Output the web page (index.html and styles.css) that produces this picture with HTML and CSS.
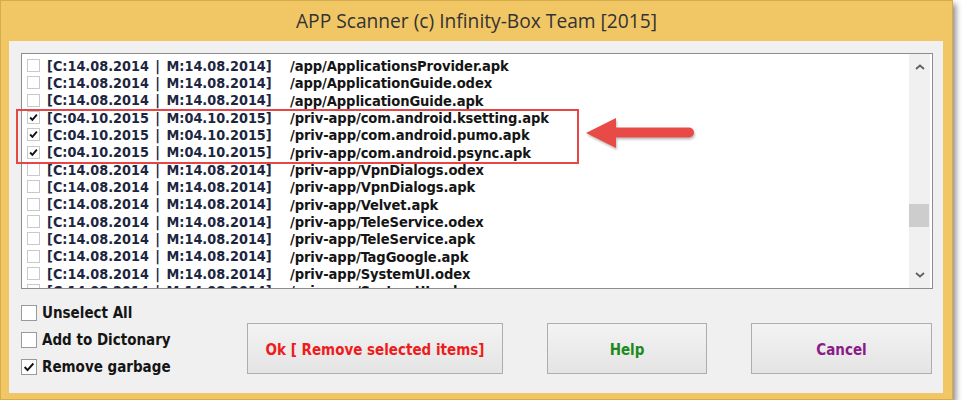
FILE: index.html
```html
<!DOCTYPE html>
<html lang="en">
<head>
  <meta charset="UTF-8">
  <title>APP Scanner (c) Infinity-Box Team [2015]</title>
  <link rel="stylesheet" href="styles.css">
</head>
<body>
  <div class="window">
    <div class="titlebar">APP Scanner (c) Infinity-Box Team [2015]</div>
    <div class="client">
      <div class="list">
        <div class="rows">
          <div class="row"><span class="box"></span><span class="date">[C:14.08.2014 | M:14.08.2014]</span><span class="path">/app/ApplicationsProvider.apk</span></div>
          <div class="row"><span class="box"></span><span class="date">[C:14.08.2014 | M:14.08.2014]</span><span class="path">/app/ApplicationGuide.odex</span></div>
          <div class="row"><span class="box"></span><span class="date">[C:14.08.2014 | M:14.08.2014]</span><span class="path">/app/ApplicationGuide.apk</span></div>
          <div class="row"><span class="box checked"><svg viewBox="0 0 13 13"><path d="M2.5 6.5 L5.2 9.3 L10.5 3.2"/></svg></span><span class="date">[C:04.10.2015 | M:04.10.2015]</span><span class="path">/priv-app/com.android.ksetting.apk</span></div>
          <div class="row"><span class="box checked"><svg viewBox="0 0 13 13"><path d="M2.5 6.5 L5.2 9.3 L10.5 3.2"/></svg></span><span class="date">[C:04.10.2015 | M:04.10.2015]</span><span class="path">/priv-app/com.android.pumo.apk</span></div>
          <div class="row"><span class="box checked"><svg viewBox="0 0 13 13"><path d="M2.5 6.5 L5.2 9.3 L10.5 3.2"/></svg></span><span class="date">[C:04.10.2015 | M:04.10.2015]</span><span class="path">/priv-app/com.android.psync.apk</span></div>
          <div class="row"><span class="box"></span><span class="date">[C:14.08.2014 | M:14.08.2014]</span><span class="path">/priv-app/VpnDialogs.odex</span></div>
          <div class="row"><span class="box"></span><span class="date">[C:14.08.2014 | M:14.08.2014]</span><span class="path">/priv-app/VpnDialogs.apk</span></div>
          <div class="row"><span class="box"></span><span class="date">[C:14.08.2014 | M:14.08.2014]</span><span class="path">/priv-app/Velvet.apk</span></div>
          <div class="row"><span class="box"></span><span class="date">[C:14.08.2014 | M:14.08.2014]</span><span class="path">/priv-app/TeleService.odex</span></div>
          <div class="row"><span class="box"></span><span class="date">[C:14.08.2014 | M:14.08.2014]</span><span class="path">/priv-app/TeleService.apk</span></div>
          <div class="row"><span class="box"></span><span class="date">[C:14.08.2014 | M:14.08.2014]</span><span class="path">/priv-app/TagGoogle.apk</span></div>
          <div class="row"><span class="box"></span><span class="date">[C:14.08.2014 | M:14.08.2014]</span><span class="path">/priv-app/SystemUI.odex</span></div>
          <div class="row"><span class="box"></span><span class="date">[C:14.08.2014 | M:14.08.2014]</span><span class="path">/priv-app/SystemUI.apk</span></div>
        </div>
        <div class="scrollbar">
          <svg class="arrow-up" viewBox="0 0 10 6"><path d="M1 5 L5 1.5 L9 5"/></svg>
          <div class="track"><div class="thumb"></div></div>
          <svg class="arrow-down" viewBox="0 0 10 6"><path d="M1 1 L5 4.5 L9 1"/></svg>
        </div>
      </div>

      <div class="bottom">
        <div class="options">
          <label class="option"><span class="cb"></span>Unselect All</label>
          <label class="option"><span class="cb"></span>Add to Dictonary</label>
          <label class="option"><span class="cb"><svg viewBox="0 0 16 16"><path d="M3 8 L6.3 11.5 L13 4"/></svg></span>Remove garbage</label>
        </div>
        <button class="btn btn-ok">Ok [ Remove selected items]</button>
        <button class="btn btn-help">Help</button>
        <button class="btn btn-cancel">Cancel</button>
      </div>
    </div>

    <div class="highlight"></div>
    <svg class="callout" viewBox="0 0 115 36">
      <line x1="30" y1="17.5" x2="105" y2="17.5"/>
      <polygon points="2,18 32,3 32,33"/>
    </svg>
  </div>
</body>
</html>
```

FILE: styles.css
```css
body {
  margin: 0;
  background-color: #ffffff;
  font-family: "DejaVu Sans Condensed", "DejaVu Sans", sans-serif;
}

.window {
  position: relative;
  width: 953px;
  height: 400px;
  box-sizing: border-box;
  background-color: #f1c766;
  border: 1px solid #d6ab4c;
  box-shadow: 3px 4px 6px rgba(0, 0, 0, 0.45);
  display: flex;
  flex-direction: column;
}

.titlebar {
  height: 40px;
  line-height: 40px;
  text-align: center;
  font-family: "Open Sans", "Noto Sans", sans-serif;
  font-size: 19.2px;
  color: #333333;
}

.client {
  flex: 1;
  margin: 0 9px 6px 8px;
  background-color: #f0f0f0;
  padding: 12px 10px 0 12px;
  display: flex;
  flex-direction: column;
}

/* list box */
.list {
  height: 236px;
  box-sizing: border-box;
  border: 1px solid #8d8d8d;
  background-color: #ffffff;
  display: flex;
}

.rows {
  flex: 1;
  overflow: hidden;
  padding-top: 3px;
}

.row {
  height: 17.33px;
  display: flex;
  align-items: center;
  font-weight: bold;
  white-space: nowrap;
}

.box {
  width: 13px;
  height: 13px;
  box-sizing: border-box;
  border: 1px solid #c9c9c9;
  margin-left: 5px;
  margin-right: 7px;
  flex-shrink: 0;
}

.box svg {
  display: block;
  width: 11px;
  height: 11px;
}

.box path,
.cb path {
  fill: none;
  stroke: #111;
  stroke-width: 2.2;
}

.date {
  width: 243px;
  flex-shrink: 0;
  font-size: 14.3px;
  word-spacing: 2px;
  color: #1c2640;
}

.path {
  font-size: 14.6px;
  letter-spacing: -0.1px;
  color: #151515;
}

.scrollbar {
  width: 21px;
  margin-right: 2px;
  background-color: #f0f0f0;
  display: flex;
  flex-direction: column;
  align-items: center;
}

.scrollbar svg {
  width: 10px;
  height: 6px;
  margin: 10px 0;
}

.scrollbar path {
  fill: none;
  stroke: #606060;
  stroke-width: 1.8;
}

.track {
  flex: 1;
  width: 100%;
  padding-top: 124px;
}

.thumb {
  width: 20px;
  height: 23px;
  background-color: #cdcdcd;
}

/* bottom area */
.bottom {
  display: flex;
  align-items: flex-start;
}

.options {
  width: 226px;
  padding-top: 16px;
  display: flex;
  flex-direction: column;
  gap: 11px;
}

.option {
  display: flex;
  align-items: center;
  font-weight: bold;
  font-size: 15px;
  color: #151515;
  height: 16px;
}

.cb {
  width: 16px;
  height: 16px;
  box-sizing: border-box;
  border: 1px solid #9a9a9a;
  background-color: #fff;
  margin-right: 5px;
}

.cb svg {
  display: block;
  width: 14px;
  height: 14px;
}

.btn {
  margin-top: 34px;
  height: 51px;
  border: 1px solid #adadad;
  background: linear-gradient(#f3f3f3, #e4e4e4);
  font-family: "DejaVu Sans Condensed", "DejaVu Sans", sans-serif;
  font-weight: bold;
  font-size: 15px;
  padding: 3px 0 0;
}

.btn-ok {
  width: 256px;
  color: #ee1c1c;
}

.btn-help {
  width: 160px;
  margin-left: 44px;
  color: #1d8a1d;
}

.btn-cancel {
  width: 181px;
  margin-left: 44px;
  color: #8a1a8a;
}

/* annotation overlay */
.highlight {
  position: absolute;
  left: 15px;
  top: 108px;
  width: 563px;
  height: 55px;
  box-sizing: border-box;
  border: 2px solid #e64646;
}

.callout {
  position: absolute;
  left: 583px;
  top: 114px;
  width: 115px;
  height: 36px;
  filter: drop-shadow(1px 2px 1px rgba(0, 0, 0, 0.25));
}

.callout line {
  stroke: #e84a48;
  stroke-width: 10;
  stroke-linecap: round;
}

.callout polygon {
  fill: #e84a48;
}
```
